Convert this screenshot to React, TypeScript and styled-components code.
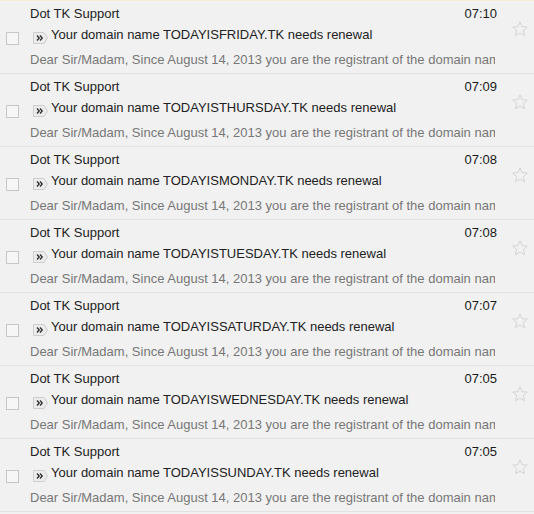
import React from "react";
import styled, { createGlobalStyle } from "styled-components";

const Global = createGlobalStyle`
  html, body { margin: 0; padding: 0; background: #f1f1f1; }
  body { font-family: Arial, "Liberation Sans", sans-serif; font-size: 13px; }
`;

const List = styled.div`
  width: 534px;
  border-top: 1px solid #f3eed6;
  background: #f1f1f1;
`;

const Row = styled.div`
  display: flex;
  height: 72px;
  border-bottom: 1px solid #e2e2e2;
  box-sizing: content-box;
`;

const CheckCol = styled.div`
  width: 30px;
  flex: none;
  padding-top: 31px;
  padding-left: 6px;
  box-sizing: border-box;
`;

const Check = styled.div`
  width: 13px;
  height: 13px;
  box-sizing: border-box;
  border: 1px solid #c6c6c6;
  background: #f6f6f6;
`;

const Content = styled.div`
  width: 468px;
  flex: none;
  padding-top: 5px;
  box-sizing: border-box;
`;

const TopLine = styled.div`
  display: flex;
  justify-content: space-between;
  line-height: 16px;
  height: 16px;
  color: #222;
`;

const Time = styled.span`
  padding-right: 1px;
  color: #1a1a1a;
`;

const SubjectLine = styled.div`
  display: flex;
  align-items: center;
  margin-top: 5px;
  height: 16px;
  line-height: 16px;
  color: #222;
  white-space: nowrap;
`;

const Marker = styled.svg`
  width: 15px;
  height: 12px;
  margin-left: 3px;
  margin-right: 3px;
  margin-top: 5px;
  flex: none;
`;

const Snippet = styled.div`
  margin-top: 9px;
  width: 465px;
  height: 16px;
  line-height: 16px;
  color: #777;
  white-space: nowrap;
  overflow: hidden;
`;

const StarCol = styled.div`
  flex: 1;
  display: flex;
  justify-content: center;
  padding-top: 19px;
  padding-left: 8px;
`;

const Star = styled.svg`
  width: 18px;
  height: 18px;
`;

const days = [
  ["TODAYISFRIDAY", "07:10"],
  ["TODAYISTHURSDAY", "07:09"],
  ["TODAYISMONDAY", "07:08"],
  ["TODAYISTUESDAY", "07:08"],
  ["TODAYISSATURDAY", "07:07"],
  ["TODAYISWEDNESDAY", "07:05"],
  ["TODAYISSUNDAY", "07:05"],
];

function MarkerIcon() {
  return (
    <Marker viewBox="0 0 15 12">
      <path d="M0.5 0.5 H11 L14.5 6 L11 11.5 H0.5 Z" fill="#ececec" stroke="#cdcdcd" strokeWidth="1" />
      <path d="M4 3.5 L6.2 6 L4 8.5 M7 3.5 L9.2 6 L7 8.5" fill="none" stroke="#333" strokeWidth="1.4" />
    </Marker>
  );
}

function StarIcon() {
  return (
    <Star viewBox="0 0 24 24">
      <path
        d="M12 2.5 L14.8 8.9 L21.7 9.5 L16.5 14.1 L18 20.9 L12 17.3 L6 20.9 L7.5 14.1 L2.3 9.5 L9.2 8.9 Z"
        fill="none"
        stroke="#d0d0d0"
        strokeWidth="1.2"
      />
    </Star>
  );
}

export default function App() {
  return (
    <>
      <Global />
      <List>
        {days.map(([d, t]) => (
          <Row key={d}>
            <CheckCol>
              <Check />
            </CheckCol>
            <Content>
              <TopLine>
                <span>Dot TK Support</span>
                <Time>{t}</Time>
              </TopLine>
              <SubjectLine>
                <MarkerIcon />
                <span>Your domain name {d}.TK needs renewal</span>
              </SubjectLine>
              <Snippet>
                Dear Sir/Madam, Since August 14, 2013 you are the registrant of the domain name {d}.TK
              </Snippet>
            </Content>
            <StarCol>
              <StarIcon />
            </StarCol>
          </Row>
        ))}
      </List>
    </>
  );
}
